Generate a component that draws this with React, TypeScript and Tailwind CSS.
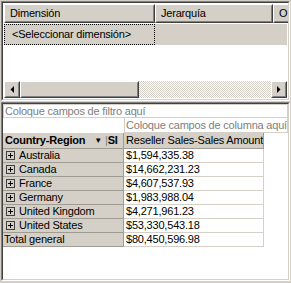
import React from "react";

const raised =
  "border border-t-white border-l-white border-r-[#404040] border-b-[#404040]";

function ArrowBtn({ dir }: { dir: "left" | "right" }) {
  return (
    <div className={`w-[16px] h-[17px] shrink-0 bg-[#d4d0c8] ${raised}`}>
      <div className="w-full h-full border border-t-[#d4d0c8] border-l-[#d4d0c8] border-r-[#808080] border-b-[#808080] flex items-center justify-center">
        <svg width="4" height="7" viewBox="0 0 4 7">
          {dir === "left" ? (
            <path d="M4 0 L4 7 L0.5 3.5 Z" fill="#000" />
          ) : (
            <path d="M0 0 L0 7 L3.5 3.5 Z" fill="#000" />
          )}
        </svg>
      </div>
    </div>
  );
}

function HeaderCell({ w, children }: { w: string; children: React.ReactNode }) {
  return (
    <div className={`${w} h-[19px] shrink-0 bg-[#d4d0c8] ${raised}`}>
      <div className="w-full h-full border border-t-[#d4d0c8] border-l-[#d4d0c8] border-r-[#808080] border-b-[#808080] pl-[4px] flex items-center overflow-hidden whitespace-nowrap">
        {children}
      </div>
    </div>
  );
}

function PlusBox() {
  return (
    <div className="w-[9px] h-[9px] shrink-0 border border-[#404040] relative">
      <div className="absolute left-[1px] top-[3px] w-[5px] h-[1px] bg-black" />
      <div className="absolute left-[3px] top-[1px] w-[1px] h-[5px] bg-black" />
    </div>
  );
}

const rows = [
  ["Australia", "$1,594,335.38"],
  ["Canada", "$14,662,231.23"],
  ["France", "$4,607,537.93"],
  ["Germany", "$1,983,988.04"],
  ["United Kingdom", "$4,271,961.23"],
  ["United States", "$53,330,543.18"],
];

export default function App() {
  return (
    <div
      className="w-[291px] h-[283px] bg-[#d4d0c8] text-[11px] leading-none tracking-[-0.2px] text-black overflow-hidden flex flex-col pl-[1px] pt-[1px] pr-[1px]"
      style={{ fontFamily: '"Liberation Sans", Arial, sans-serif' }}
    >
      {/* Top panel */}
      <div className="h-[100px] shrink-0 border border-t-[#808080] border-l-[#808080] border-r-white border-b-white">
        <div className="h-full border border-t-[#404040] border-l-[#404040] border-r-[#d4d0c8] border-b-[#d4d0c8] bg-white flex flex-col p-[1px] overflow-hidden">
          <div className="flex h-[19px] shrink-0">
            <HeaderCell w="w-[151px]">Dimensión</HeaderCell>
            <HeaderCell w="w-[118px]">Jerarquía</HeaderCell>
            <HeaderCell w="w-[40px]">O</HeaderCell>
          </div>
          <div className="h-[21px] shrink-0 bg-[#d4d0c8] flex mt-[1px]">
            <div className="w-[151px] h-full border border-dotted border-black flex items-center pl-[7px]">
              &lt;Seleccionar dimensión&gt;
            </div>
          </div>
          <div className="flex-1" />
          <div className="h-[17px] shrink-0 flex">
            <ArrowBtn dir="left" />
            <div className={`w-[119px] h-[17px] shrink-0 bg-[#d4d0c8] ${raised}`}>
              <div className="w-full h-full border border-t-[#d4d0c8] border-l-[#d4d0c8] border-r-[#808080] border-b-[#808080]" />
            </div>
            <div className="flex-1 bg-[repeating-conic-gradient(#ffffff_0_25%,#d4d0c8_0_50%)] bg-[length:2px_2px]" />
            <ArrowBtn dir="right" />
          </div>
        </div>
      </div>

      {/* Bottom panel */}
      <div className="flex-1 mt-[1px] border border-t-[#808080] border-l-[#808080] border-r-white border-b-white">
        <div className="h-full border border-t-[#404040] border-l-[#404040] border-r-[#d4d0c8] border-b-[#d4d0c8] bg-white flex flex-col overflow-hidden">
          <div className="h-[14px] shrink-0 border border-[#d4d0c8] text-[#808080] flex items-center pl-[1px] whitespace-nowrap">
            Coloque campos de filtro aquí
          </div>
          <div className="h-[15px] shrink-0 flex">
            <div className="w-[121px] shrink-0" />
            <div className="flex-1 border border-t-0 border-[#d4d0c8] text-[#808080] flex items-center pl-[1px] whitespace-nowrap overflow-hidden">
              Coloque campos de columna aquí
            </div>
          </div>
          <div className="flex h-[16px] shrink-0">
            <div className="w-[121px] shrink-0 bg-[#d4d0c8] border-r border-b border-[#a09c94] flex items-center pl-[2px] font-bold whitespace-nowrap overflow-hidden">
              Country-Region
              <span className="ml-[9px] text-[8px]">▼</span>
              <span className="ml-[3px] font-normal text-[#808080]">|</span>
              <span>SI</span>
            </div>
            <div className="w-[140px] shrink-0 bg-[#d4d0c8] border-r border-b border-[#a09c94] flex items-center pl-[2px] whitespace-nowrap overflow-hidden">
              Reseller Sales-Sales Amount
            </div>
          </div>
          {rows.map(([name, val]) => (
            <div key={name} className="flex h-[14px] shrink-0">
              <div className="w-[121px] shrink-0 bg-[#d4d0c8] border-r border-b border-[#a09c94] flex items-center pl-[3px] gap-[4px] whitespace-nowrap">
                <PlusBox />
                {name}
              </div>
              <div className="w-[140px] shrink-0 border-r border-b border-[#d4d0c8] flex items-center pl-[2px] whitespace-nowrap">
                {val}
              </div>
            </div>
          ))}
          <div className="flex h-[14px] shrink-0">
            <div className="w-[121px] shrink-0 bg-[#d4d0c8] border-r border-b border-[#a09c94] flex items-center pl-[1px] whitespace-nowrap">
              Total general
            </div>
            <div className="w-[140px] shrink-0 border-r border-b border-[#d4d0c8] flex items-center pl-[2px] whitespace-nowrap">
              $80,450,596.98
            </div>
          </div>
        </div>
      </div>
      <div className="h-[2px] shrink-0" />
    </div>
  );
}
